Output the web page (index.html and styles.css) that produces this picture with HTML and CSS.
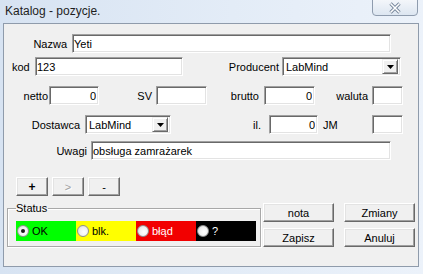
FILE: index.html
```html
<!DOCTYPE html>
<html lang="pl">
<head>
  <meta charset="UTF-8">
  <title>Katalog - pozycje.</title>
  <link rel="stylesheet" href="styles.css">
</head>
<body>

<div class="window">
  <div class="titlebar">
    <span class="title">Katalog - pozycje.</span>
    <button class="close-btn" aria-label="Zamknij">
      <svg width="14" height="12" viewBox="0 0 14 12">
        <path d="M2.5 1.5 L11.5 10.5 M11.5 1.5 L2.5 10.5" stroke="#75859a" stroke-width="3.2" fill="none"/>
        <path d="M2.5 1.5 L11.5 10.5 M11.5 1.5 L2.5 10.5" stroke="#ffffff" stroke-width="1.5" fill="none"/>
      </svg>
    </button>
  </div>

  <div class="client">
    <div class="row row-nazwa">
      <span class="lbl lbl-nazwa">Nazwa</span>
      <input class="edit edit-nazwa" value="Yeti">
    </div>

    <div class="row row-kod">
      <span class="lbl lbl-kod">kod</span>
      <input class="edit edit-kod" value="123">
      <span class="lbl lbl-producent">Producent</span>
      <div class="combo combo-producent">
        <span class="combo-text">LabMind</span>
        <span class="combo-arrow"><svg width="7" height="4" viewBox="0 0 7 4"><path d="M0 0 H7 L3.5 4 Z" fill="#000"/></svg></span>
      </div>
    </div>

    <div class="row row-ceny">
      <span class="lbl lbl-netto">netto</span>
      <input class="edit edit-netto num" value="0">
      <span class="lbl lbl-sv">SV</span>
      <input class="edit edit-sv" value="">
      <span class="lbl lbl-brutto">brutto</span>
      <input class="edit edit-brutto num" value="0">
      <span class="lbl lbl-waluta">waluta</span>
      <input class="edit edit-small" value="">
    </div>

    <div class="row row-dostawca">
      <span class="lbl lbl-dostawca">Dostawca</span>
      <div class="combo combo-dostawca">
        <span class="combo-text">LabMind</span>
        <span class="combo-arrow"><svg width="7" height="4" viewBox="0 0 7 4"><path d="M0 0 H7 L3.5 4 Z" fill="#000"/></svg></span>
      </div>
      <span class="lbl lbl-il">il.</span>
      <input class="edit edit-il num" value="0">
      <span class="lbl lbl-jm">JM</span>
      <input class="edit edit-small" value="">
    </div>

    <div class="row row-uwagi">
      <span class="lbl lbl-uwagi">Uwagi</span>
      <input class="edit edit-uwagi" value="obsługa zamrażarek">
    </div>

    <div class="row row-nav">
      <button class="btn btn-nav btn-bold">+</button>
      <button class="btn btn-nav btn-disabled">&gt;</button>
      <button class="btn btn-nav">-</button>
    </div>

    <div class="bottom">
      <fieldset class="status">
        <legend>Status</legend>
        <div class="radios">
          <div class="opt opt-ok"><span class="radio checked"></span>OK</div>
          <div class="opt opt-blk"><span class="radio"></span>blk.</div>
          <div class="opt opt-blad"><span class="radio"></span>błąd</div>
          <div class="opt opt-unknown"><span class="radio"></span>?</div>
        </div>
      </fieldset>

      <div class="actions">
        <button class="btn">nota</button>
        <button class="btn">Zmiany</button>
        <button class="btn">Zapisz</button>
        <button class="btn">Anuluj</button>
      </div>
    </div>
  </div>
</div>

</body>
</html>
```

FILE: styles.css
```css
body {
  margin: 0;
  font-family: "Liberation Sans", Arial, sans-serif;
  font-size: 11px;
  color: #000;
}

.window {
  width: 423px;
  height: 274px;
  overflow: hidden;
  background: linear-gradient(90deg, #d7e3f2 0%, #e3ecf7 55%, #ecf2fa 100%);
}

/* title bar */

.titlebar {
  height: 23px;
  display: flex;
  justify-content: space-between;
  align-items: flex-start;
}

.title {
  font-size: 12px;
  line-height: 14px;
  padding: 4px 0 0 5px;
  color: #1e1e1e;
}

.close-btn {
  width: 46px;
  height: 17px;
  margin: -1px 5px 0 0;
  padding: 0;
  box-sizing: border-box;
  border: 1px solid #8f9cae;
  border-radius: 0 0 4px 4px;
  background: linear-gradient(#f3f6fa, #dde6f1);
  display: flex;
  align-items: center;
  justify-content: center;
}

/* client area */

.client {
  margin: 0 4px 0 3px;
  height: 244px;
  box-sizing: border-box;
  border: 1px solid #8f9bab;
  background: #f0f0f0;
  padding-top: 10px;
}

.row {
  display: flex;
  align-items: center;
  height: 19px;
}

.row-kod { margin-top: 4px; }
.row-ceny { margin-top: 10px; }
.row-dostawca { margin-top: 10px; }
.row-uwagi { margin-top: 7px; }
.row-nav { margin-top: 17px; padding-left: 12px; gap: 4px; }

.lbl {
  box-sizing: border-box;
  text-align: right;
  white-space: nowrap;
}

.lbl-nazwa { width: 68px; padding-right: 5px; }
.lbl-kod { width: 31px; text-align: left; padding-left: 8px; }
.lbl-producent { width: 99px; padding-right: 3px; }
.lbl-netto { width: 45px; padding-right: 1px; }
.lbl-sv { width: 57px; padding-right: 4px; }
.lbl-brutto { width: 57px; padding-right: 5px; }
.lbl-waluta { width: 57px; padding-right: 4px; }
.lbl-dostawca { width: 81px; padding-right: 5px; }
.lbl-il { width: 98px; padding-right: 8px; }
.lbl-jm { width: 54px; text-align: left; padding-left: 5px; }
.lbl-uwagi { width: 87px; padding-right: 4px; }

/* sunken edit fields */

.edit {
  box-sizing: border-box;
  height: 19px;
  margin: 0;
  padding: 0 2px 0 1px;
  font: inherit;
  color: #000;
  background: #fff;
  border: 1px solid;
  border-color: #a0a0a0 #ffffff #ffffff #a0a0a0;
  box-shadow: inset 1px 1px 0 #696969, inset -1px -1px 0 #e3e3e3;
  outline: none;
}

.edit.num { text-align: right; }

.edit-nazwa { width: 319px; }
.edit-kod { width: 148px; }
.edit-netto { width: 50px; }
.edit-sv { width: 51px; }
.edit-brutto { width: 51px; }
.edit-small { width: 31px; }
.edit-il { width: 49px; }
.edit-uwagi { width: 300px; }

/* combo boxes */

.combo {
  box-sizing: border-box;
  height: 19px;
  display: flex;
  align-items: center;
  justify-content: space-between;
  background: #fff;
  border: 1px solid;
  border-color: #a0a0a0 #ffffff #ffffff #a0a0a0;
  box-shadow: inset 1px 1px 0 #696969, inset -1px -1px 0 #e3e3e3;
  padding: 1px 2px 1px 3px;
}

.combo-producent { width: 119px; }
.combo-dostawca { width: 86px; }

.combo-arrow {
  box-sizing: border-box;
  width: 16px;
  height: 15px;
  display: flex;
  align-items: center;
  justify-content: center;
  background: #f0f0f0;
  border: 1px solid;
  border-color: #f0f0f0 #696969 #696969 #f0f0f0;
  box-shadow: inset 1px 1px 0 #fff, inset -1px -1px 0 #a0a0a0;
}

/* push buttons */

.btn {
  box-sizing: border-box;
  height: 19px;
  margin: 0;
  padding: 0;
  font: inherit;
  color: #000;
  background: #f0f0f0;
  border: 1px solid;
  border-color: #ffffff #696969 #696969 #ffffff;
  box-shadow: inset -1px -1px 0 #a0a0a0, inset 1px 1px 0 #e3e3e3;
}

.btn-nav { width: 32px; }
.btn-bold { font-weight: bold; font-size: 12px; }

.btn-disabled {
  color: #a0a0a0;
  text-shadow: 1px 1px 0 #fff;
}

/* status group + actions */

.bottom {
  display: flex;
  align-items: flex-start;
  margin-top: 6px;
}

.status {
  width: 254px;
  box-sizing: border-box;
  margin: 0 0 0 3px;
  padding: 6px 4px 5px 8px;
  border: 1px solid #a8a8a8;
  box-shadow: inset 1px 1px 0 #fff, 1px 1px 0 #fff;
}

.status legend {
  padding: 0 1px 0 0;
  line-height: 13px;
}

.radios {
  display: flex;
  height: 20px;
}

.opt {
  width: 60px;
  display: flex;
  align-items: center;
  gap: 3px;
  padding-left: 1px;
  box-sizing: border-box;
}

.opt-ok { background: #00ff00; }
.opt-blk { background: #ffff00; }
.opt-blad { background: #f20000; color: #fff; }
.opt-unknown { background: #000; color: #fff; }

.radio {
  box-sizing: border-box;
  width: 12px;
  height: 12px;
  border-radius: 50%;
  border: 1px solid #8e8f8f;
  background: radial-gradient(circle at 60% 60%, #ffffff 0%, #f2f2f2 45%, #d6d6d6 100%);
  display: flex;
  align-items: center;
  justify-content: center;
}

.radio.checked::after {
  content: "";
  width: 4px;
  height: 4px;
  border-radius: 50%;
  background: #1a1a1a;
}

.actions {
  display: grid;
  grid-template-columns: 71px 71px;
  column-gap: 10px;
  row-gap: 6px;
  margin: 1px 0 0 2px;
}
```
